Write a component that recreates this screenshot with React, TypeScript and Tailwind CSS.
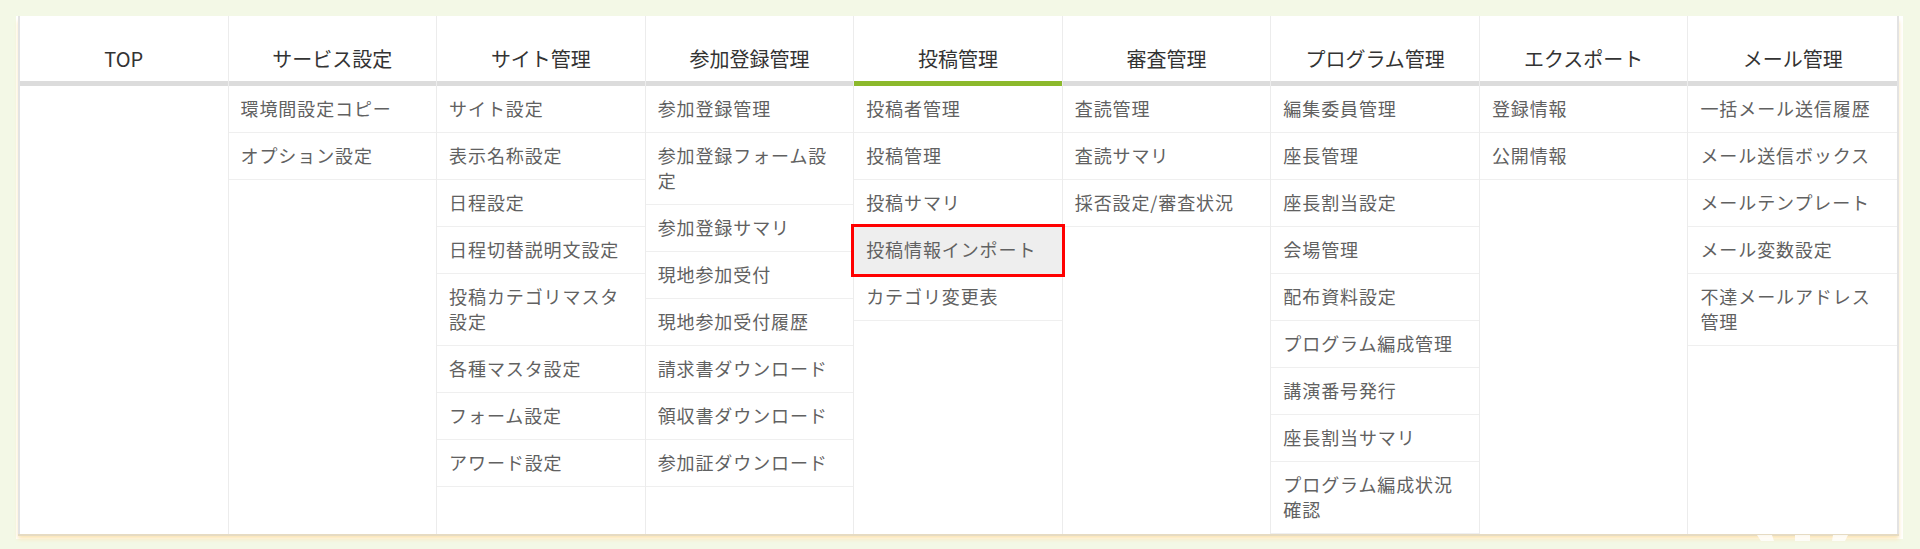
import React from 'react';

type Column = {
    title: string;
    items: string[];
    active?: boolean;
};

const columns: Column[] = [
    { title: 'TOP', items: [] },
    { title: 'サービス設定', items: ['環境間設定コピー', 'オプション設定'] },
    {
        title: 'サイト管理',
        items: ['サイト設定', '表示名称設定', '日程設定', '日程切替説明文設定', '投稿カテゴリマスタ設定', '各種マスタ設定', 'フォーム設定', 'アワード設定'],
    },
    {
        title: '参加登録管理',
        items: ['参加登録管理', '参加登録フォーム設定', '参加登録サマリ', '現地参加受付', '現地参加受付履歴', '請求書ダウンロード', '領収書ダウンロード', '参加証ダウンロード'],
    },
    {
        title: '投稿管理',
        active: true,
        items: ['投稿者管理', '投稿管理', '投稿サマリ', '投稿情報インポート', 'カテゴリ変更表'],
    },
    { title: '審査管理', items: ['査読管理', '査読サマリ', '採否設定/審査状況'] },
    {
        title: 'プログラム管理',
        items: ['編集委員管理', '座長管理', '座長割当設定', '会場管理', '配布資料設定', 'プログラム編成管理', '講演番号発行', '座長割当サマリ', 'プログラム編成状況確認'],
    },
    { title: 'エクスポート', items: ['登録情報', '公開情報'] },
    {
        title: 'メール管理',
        items: ['一括メール送信履歴', 'メール送信ボックス', 'メールテンプレート', 'メール変数設定', '不達メールアドレス管理'],
    },
];

// the item that is outlined in red in the screenshot
const highlighted = '投稿情報インポート';

function MenuColumn({ column, last }: { column: Column; last: boolean }) {
    return (
        <div className={'flex flex-col ' + (last ? '' : 'border-r border-[#ececec]')}>
            <div
                className={
                    'h-[70px] flex items-end justify-center pb-[8px] border-b-[5px] text-[20px] leading-[28px] text-[#333] ' +
                    (column.active ? 'border-[#8cb92c]' : 'border-[#dcdcdc]')
                }
            >
                {column.title}
            </div>
            {column.items.map((item) => (
                <div
                    key={item}
                    className={
                        'border-b border-[#efefef] px-[12px] pt-[10px] pb-[11.5px] text-[18px] leading-[24.5px] tracking-[0.05em] text-[#616161] ' +
                        (item === highlighted ? 'relative z-10 bg-[#eeeeee] outline-3 outline-[#ff0000]' : '')
                    }
                >
                    {item}
                </div>
            ))}
        </div>
    );
}

export default function App() {
    return (
        <div className="relative min-h-[549px] bg-[#f3f8e6] pt-[16px] pl-[16px] font-['Noto_Sans_CJK_JP','Noto_Sans',sans-serif]">
            <div className="w-[1887px] bg-white pl-[2px] pr-[4px] pb-[5px]">
                <div className="grid grid-cols-9 border-x-2 border-[#e3e3e3] shadow-[0_2px_0_#e6dbc2,0_5px_4px_#fbe6b8]">
                    {columns.map((c, i) => (
                        <MenuColumn key={c.title} column={c} last={i === columns.length - 1} />
                    ))}
                </div>
            </div>
            {/* bits of the background watermark peeking out under the panel */}
            <svg className="absolute left-[1755px] top-[535px]" width="96" height="6" viewBox="0 0 96 6">
                <polygon points="2,0 17,0 19,6 6,6" fill="#ffffff" fillOpacity="0.8" />
                <rect x="40" y="0" width="15" height="6" fill="#ffffff" fillOpacity="0.8" />
                <polygon points="78,0 93,0 90,6 77,6" fill="#ffffff" fillOpacity="0.8" />
            </svg>
        </div>
    );
}
